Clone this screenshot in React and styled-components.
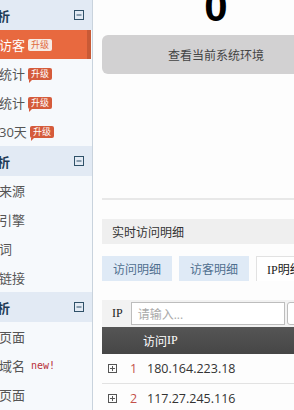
import styled, { createGlobalStyle } from "styled-components";

const GlobalStyle = createGlobalStyle`
  html, body {
    margin: 0;
    padding: 0;
    background: #fdfdfd;
    overflow: hidden;
  }
  body {
    font-family: "Open Sans", "Noto Sans CJK SC", sans-serif;
  }
`;

const Page = styled.div`
  display: flex;
  height: 410px;
  margin-left: -45px;
  overflow: hidden;
`;

const Sidebar = styled.div`
  width: 137px;
  flex-shrink: 0;
  background: #f6f9fc;
  border-right: 1px solid #c9d3dd;
`;

const GroupHead = styled.div`
  height: 30px;
  display: flex;
  align-items: center;
  justify-content: space-between;
  padding: 0 8px 0 3px;
  background: #e2eaf4;
  font-size: 13px;
  color: #1f3a55;
  font-weight: 600;
`;

const Item = styled.div`
  height: 29px;
  display: flex;
  align-items: center;
  gap: 3px;
  padding-left: 18px;
  font-size: 13px;
  color: ${(p) => (p.active ? "#fff" : "#555")};
  background: ${(p) => (p.active ? "#e8693f" : "transparent")};
  border-right: 4px solid ${(p) => (p.active ? "#c85a36" : "transparent")};
  margin-right: ${(p) => (p.active ? "1px" : "0")};
`;

const Badge = styled.span`
  position: relative;
  font-size: 9px;
  line-height: 12px;
  padding: 0 3px;
  border-radius: 2px;
  background: ${(p) => (p.light ? "#f7ebe4" : "#d55b3b")};
  color: ${(p) => (p.light ? "#e06a40" : "#fff")};
  &::after {
    content: "";
    display: ${(p) => (p.light ? "none" : "block")};
    position: absolute;
    left: 1px;
    bottom: -3px;
    border-left: 3px solid #d55b3b;
    border-bottom: 3px solid transparent;
  }
`;

const NewTag = styled.span`
  margin-left: 3px;
  font-size: 10px;
  color: #b8323a;
  font-family: "DejaVu Sans Mono", monospace;
`;

const Main = styled.div`
  width: 228px;
  flex-shrink: 0;
  padding: 0 9px;
`;

const BigNumber = styled.div`
  margin-top: -14px;
  height: 42px;
  font-family: "Liberation Sans", sans-serif;
  font-size: 42px;
  line-height: 42px;
  font-weight: bold;
  text-align: center;
  color: #000;
`;

const EnvButton = styled.div`
  margin-top: 7px;
  height: 39px;
  border-radius: 6px;
  background: #d2d1d2;
  display: flex;
  align-items: center;
  justify-content: center;
  font-size: 12px;
  color: #444;
`;

const Divider = styled.div`
  margin-top: 124px;
  border-top: 2px solid #e8e8e8;
`;

const TitleBar = styled.div`
  margin-top: 19px;
  height: 25px;
  background: #efefef;
  display: flex;
  align-items: center;
  padding-left: 10px;
  font-size: 12px;
  color: #333;
`;

const Tabs = styled.div`
  margin-top: 12px;
  display: flex;
  gap: 7px;
  height: 25px;
`;

const Tab = styled.div`
  display: flex;
  align-items: center;
  padding: 0 10px;
  font-size: 12px;
  white-space: nowrap;
  color: ${(p) => (p.current ? "#222" : "#4f6f8f")};
  background: ${(p) => (p.current ? "#fff" : "#dfeaf6")};
  border: 1px solid ${(p) => (p.current ? "#e2e2e2" : "#dfeaf6")};
  border-bottom: none;
`;

const Serif = styled.span`
  font-family: "Liberation Serif", "Noto Sans CJK SC", serif;
`;

const FilterBar = styled.div`
  margin-top: 19px;
  height: 27px;
  background: #f2f2f2;
  display: flex;
  align-items: center;
  gap: 8px;
  padding-left: 10px;
  font-size: 12px;
  color: #222;
  white-space: nowrap;
`;

const Input = styled.div`
  width: 146px;
  height: 21px;
  border: 1px solid #bdbdbd;
  background: #fff;
  display: flex;
  align-items: center;
  padding-left: 6px;
  color: #aaa;
  font-size: 12px;
  flex-shrink: 0;
`;

const SelectBox = styled.div`
  width: 40px;
  height: 21px;
  margin-left: -6px;
  border: 1px solid #bdbdbd;
  border-radius: 3px;
  background: #fff;
  flex-shrink: 0;
`;

const TableHead = styled.div`
  height: 27px;
  background: linear-gradient(#555, #464646);
  display: flex;
  align-items: center;
  padding-left: 41px;
  font-size: 12px;
  color: #fff;
`;

const Row = styled.div`
  height: 29px;
  border-bottom: 1px solid #e2e2e2;
  display: flex;
  align-items: center;
  padding-left: 6px;
  font-size: 12.5px;
  color: #333;
`;

const Index = styled.span`
  width: 12px;
  margin: 0 5px 0 13px;
  color: #c4504a;
`;

const MinusBox = () => (
  <svg width="10" height="10" viewBox="0 0 10 10">
    <rect x="0.5" y="0.5" width="9" height="9" fill="none" stroke="#2f5168" />
    <line x1="2.5" y1="5" x2="7.5" y2="5" stroke="#2f5168" />
  </svg>
);

const PlusBox = () => (
  <svg width="9" height="9" viewBox="0 0 9 9">
    <rect x="0.5" y="0.5" width="8" height="8" fill="none" stroke="#555" />
    <line x1="2" y1="4.5" x2="7" y2="4.5" stroke="#555" />
    <line x1="4.5" y1="2" x2="4.5" y2="7" stroke="#555" />
  </svg>
);

const groups = [
  {
    title: "访客分析",
    items: [
      { name: "实时访客", badge: "light", active: true },
      { name: "地域统计", badge: "dark" },
      { name: "终端统计", badge: "dark" },
      { name: "最近30天", badge: "dark" },
    ],
  },
  {
    title: "来源分析",
    items: [{ name: "访问来源" }, { name: "搜索引擎" }, { name: "搜索词" }, { name: "外部链接" }],
  },
  {
    title: "受访分析",
    items: [{ name: "受访页面" }, { name: "受访域名", isNew: true }, { name: "入口页面" }],
  },
];

const rows = ["180.164.223.18", "117.27.245.116"];

export default function App() {
  return (
    <>
      <GlobalStyle />
      <Page>
        <Sidebar>
          {groups.map((g) => (
            <div key={g.title}>
              <GroupHead>
                <span>{g.title}</span>
                <MinusBox />
              </GroupHead>
              {g.items.map((it) => (
                <Item key={it.name} active={it.active}>
                  <span>{it.name}</span>
                  {it.badge && <Badge light={it.badge === "light"}>升级</Badge>}
                  {it.isNew && <NewTag>new!</NewTag>}
                </Item>
              ))}
            </div>
          ))}
        </Sidebar>
        <Main>
          <BigNumber>0</BigNumber>
          <EnvButton>查看当前系统环境</EnvButton>
          <Divider />
          <TitleBar>实时访问明细</TitleBar>
          <Tabs>
            <Tab>访问明细</Tab>
            <Tab>访客明细</Tab>
            <Tab current>
              <Serif>IP明细</Serif>
            </Tab>
          </Tabs>
          <FilterBar>
            <Serif>IP</Serif>
            <Input>请输入...</Input>
            <SelectBox />
          </FilterBar>
          <TableHead>
            访问<Serif>IP</Serif>
          </TableHead>
          {rows.map((ip, i) => (
            <Row key={ip}>
              <PlusBox />
              <Index>{i + 1}</Index>
              <span>{ip}</span>
            </Row>
          ))}
        </Main>
      </Page>
    </>
  );
}
